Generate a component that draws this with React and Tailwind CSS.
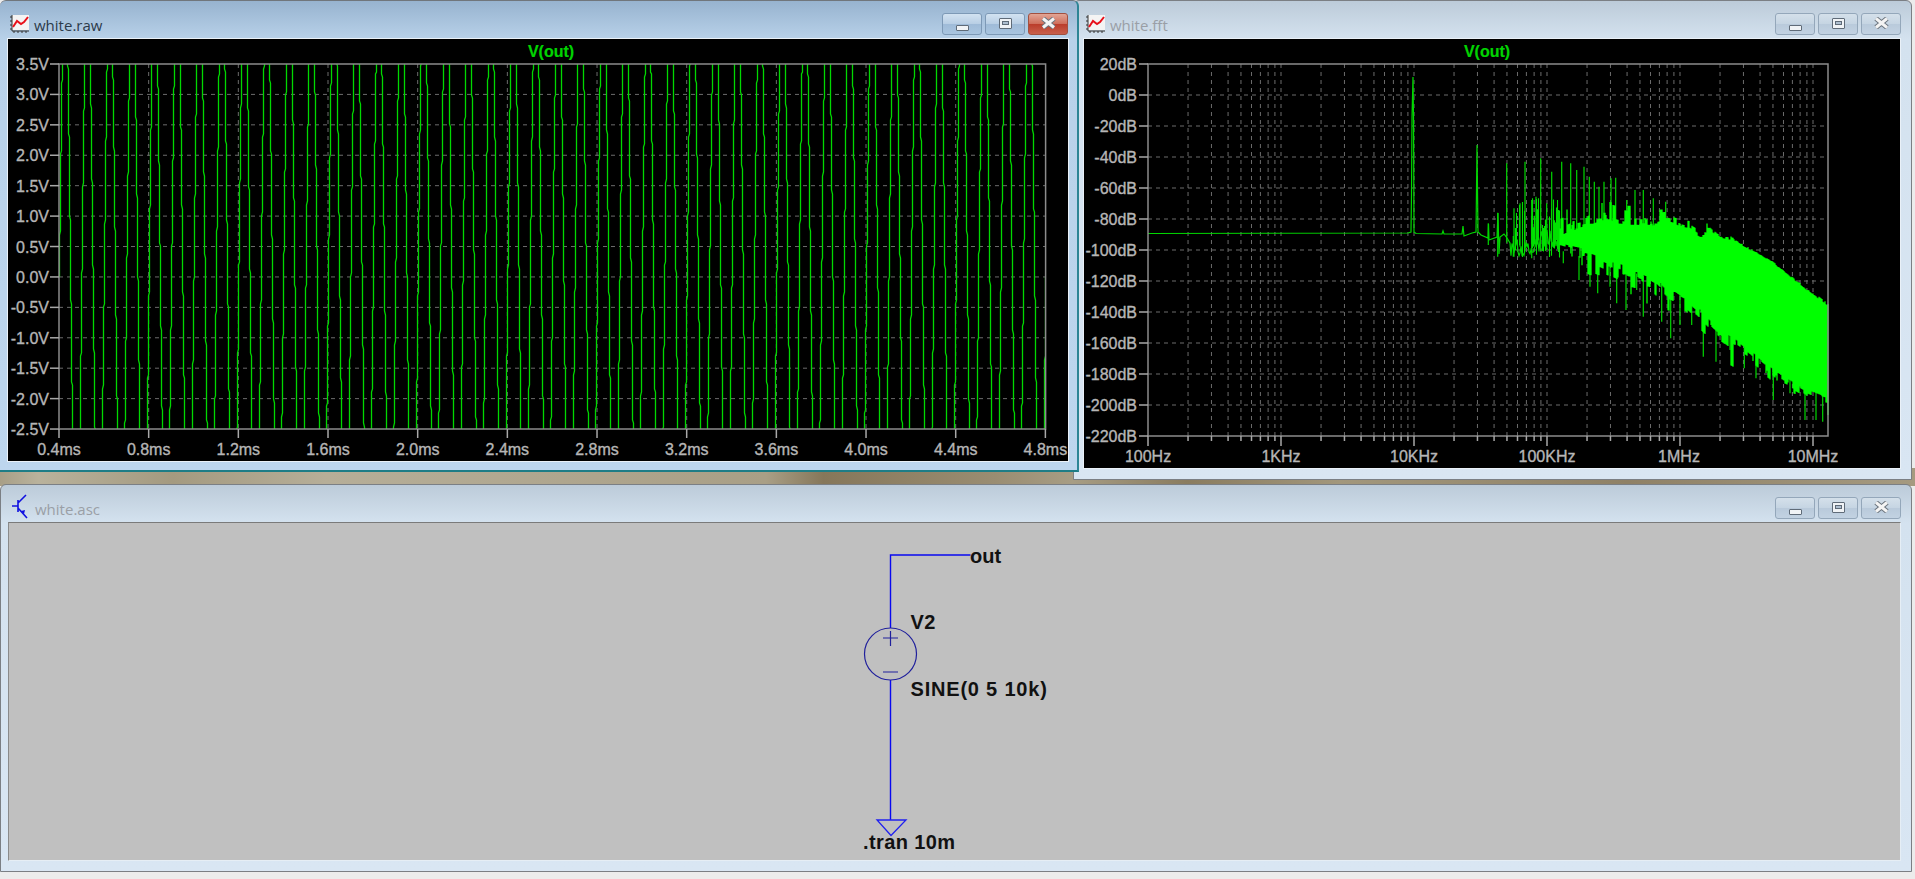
import React from "react";

const range = (a, b, s = 1) => { const o = []; for (let v = a; v <= b + 1e-9; v += s) o.push(v); return o; };

function rng(seed) {
  let a = seed;
  return () => {
    a |= 0; a = (a + 0x6d2b79f5) | 0;
    let t = Math.imul(a ^ (a >>> 15), 1 | a);
    t = (t + Math.imul(t ^ (t >>> 7), 61 | t)) ^ t;
    return ((t ^ (t >>> 14)) >>> 0) / 4294967296;
  };
}

function lerp(table, X) {
  if (X <= table[0][0]) return table[0][1];
  for (let i = 1; i < table.length; i++) {
    if (X <= table[i][0]) {
      const [a, b] = table[i - 1];
      const [c, d] = table[i];
      return b + ((d - b) * (X - a)) / (c - a);
    }
  }
  return table[table.length - 1][1];
}

function wavePath() {
  let d = "";
  let lx = null, ly = null;
  for (let i = 0; i <= 44 * 500; i++) {
    const p = i / 500;
    const v = 5 * Math.sin(2 * Math.PI * p);
    const x = Math.round(59 + p * 22.42) + 0.5;
    const y = Math.round(64 + (3.5 - v) * 60.83);
    if (x !== lx || y !== ly) {
      d += (lx === null ? "M" : "L") + x + " " + y;
      lx = x; ly = y;
    }
  }
  return d;
}

const TOP = [[180,232],[220,215],[260,205],[300,185],[340,190],[380,200],[420,200],[460,200],[500,195],[540,210],[570,215],[600,235],[630,240],[660,265],[700,270],[740,295],[770,310],[820,340],[870,380],[920,420],[985,468]];
const BOT = [[180,285],[220,300],[260,310],[300,325],[340,340],[380,360],[420,370],[460,385],[500,425],[560,455],[600,490],[650,540],[700,575],[760,620],[820,670],[870,700],[920,730],[985,755]];
const UP8 = [[20,40],[75,35],[122,25],[155,65],[185,35],[212,40],[230,60],[252,50],[268,80],[283,95],[297,110],[312,95],[333,85],[347,83],[380,150],[405,120],[430,120],[460,145],[497,155]];
const DN8 = [[40,320],[95,325],[190,340],[237,390],[270,410],[293,430],[330,410],[350,460],[378,480],[410,420],[430,500],[485,515],[512,565],[540,525],[575,525],[610,620],[648,635],[690,600],[733,655],[768,685],[820,750],[870,730],[915,810],[948,810],[968,815]];
const SP10 = [[265,520,585],[293,488,620],[342,475,620],[360,460,590],[395,450,625],[408,440,590],[440,460,600]];

function fftPaths() {
  const r = rng(12345);
  let trace = "M1148 233.5L1408 233L1411 232L1411.5 195L1412 117L1413 77L1413.5 117L1414 232L1416 233.5L1442 234L1443 231L1444 234L1462 234L1463 226L1464 236L1472 233L1476 232L1476.5 190L1477 145L1477.5 190L1478 232L1481 235L1488 238L1488.5 224L1489 240L1497 237L1498 213L1499 254L1500 237L1504 234L1507 238L1510 243";
  for (let x = 1511; x <= 1560; x++) {
    trace += "L" + x + " " + (238 + r() * 18 - (x > 1540 ? 8 : 0)).toFixed(1);
  }
  let spikes = "";
  UP8.forEach(([X, Y]) => {
    const x = 1500 + X / 3;
    spikes += `M${x.toFixed(1)} ${(150 + Y / 3).toFixed(1)}V${(238 + r() * 18).toFixed(1)}`;
  });
  DN8.forEach(([X, Y]) => {
    const x = 1500 + X / 3;
    spikes += `M${x.toFixed(1)} ${(232 + (X / 985) * 100).toFixed(1)}V${(150 + Y / 3).toFixed(1)}`;
  });
  SP10.forEach(([X, a, b]) => {
    const x = 1400 + X / 3;
    spikes += `M${x.toFixed(1)} ${(50 + a / 3).toFixed(1)}V${(50 + b / 3).toFixed(1)}`;
  });
  let sparse = "";
  for (let x = 1514; x < 1560; x++) {
    if (r() < 0.35 + (x - 1514) * 0.012) {
      const a = 228 - r() * 30;
      const b = 240 + r() * 18;
      sparse += `M${x + 0.5} ${a.toFixed(1)}V${b.toFixed(1)}`;
    }
  }
  let core = "";
  let toothT = 0, toothB = 0, remT = 0, remB = 0;
  for (let x = 1560; x <= 1828; x++) {
    const X = (x - 1500) * 3;
    const aT = X < 500 ? 26 : X < 620 ? 14 : X < 700 ? 5 : 3;
    const aB = X < 600 ? 46 : X < 800 ? 34 : 22;
    if (remT <= 0) { remT = 1 + Math.floor(r() * 3); toothT = r() * r() * aT; }
    if (remB <= 0) { remB = 1 + Math.floor(r() * 4); toothB = r() * r() * aB; }
    remT--; remB--;
    const shiftT = X < 620 ? 9 : 0;
    const t = 150 + lerp(TOP, X) / 3 + shiftT - toothT;
    const b = 150 + lerp(BOT, X) / 3 - 4 + toothB;
    core += `M${x} ${t.toFixed(1)}V${b.toFixed(1)}`;
  }
  return { trace, spikes, sparse, core };
}

const LABEL = "fill-[#b6b6b6] stroke-[#b6b6b6] stroke-[0.35px] text-[16px]";
const GRID = "stroke-[#6c6c6c] [stroke-dasharray:4_4] stroke-1";
const AXIS = "stroke-[#8c8c8c] stroke-[1.5px] fill-none";
const TICK = "stroke-[#a8a8a8] stroke-[1.5px]";
const TITLE = "fill-[#00d400] stroke-[#00d400] stroke-[0.2px] text-[16px] font-bold";

function GraphIcon() {
  return (
    <svg viewBox="0 0 20 20" className="w-5 h-5 shrink-0">
      <rect x="3" y="1" width="17" height="15" fill="#f4f4f4" />
      <path d="M3 1V17H20" stroke="#333" strokeWidth="1" fill="none" />
      <path d="M1 3H3M1 7H3M1 11H3M1 15H3M5 17V19M9 17V19M13 17V19M17 17V19" stroke="#333" strokeWidth="1" />
      <path d="M4 13L8 7L12 10L15 8L19 3" stroke="#e8101a" strokeWidth="2" fill="none" />
    </svg>
  );
}

function TransistorIcon() {
  return (
    <svg viewBox="0 0 20 26" className="w-5 h-[26px] shrink-0 -mt-[5px]">
      <path d="M2 13H8M8 7V19M8 10L16 2M8 15L17 25" stroke="#1010e0" strokeWidth="1.6" fill="none" />
      <path d="M15 17L11 18L14 21Z" fill="#1010e0" />
    </svg>
  );
}

function Glyph({ type }) {
  if (type === "min") {
    return <div className="w-[13px] h-[6px] mt-[7px] rounded-[1px] border border-[#5f6b78] bg-[#f0f3f6]" />;
  }
  if (type === "max") {
    return (
      <div className="w-[13px] h-[11px] -mt-[2px] rounded-[1px] border border-[#5f6b78] bg-[#f0f3f6] flex items-center justify-center">
        <div className="w-[7px] h-[4px] border border-[#5f6b78] bg-[#aebfd0]" />
      </div>
    );
  }
  return (
    <svg viewBox="0 0 15 12" className="w-[15px] h-3 -mt-[2px]">
      <path d="M2 1.5L13 10.5M13 1.5L2 10.5" stroke="#6a737d" strokeWidth="5" />
      <path d="M2 1.5L13 10.5M13 1.5L2 10.5" stroke="#f4f4f4" strokeWidth="3" />
    </svg>
  );
}

function Buttons({ active, mr }) {
  const base = active
    ? "border-[#7d99b6] bg-[linear-gradient(#d2e2f1_0%,#b9cfe5_48%,#9fbbd8_52%,#a9c5e0_100%)]"
    : "border-[#94a7ba] bg-[linear-gradient(#d4e0ea_0%,#c6d5e3_48%,#b9cadb_52%,#c2d2e2_100%)]";
  const close = active
    ? "border-[#a2503f] bg-[linear-gradient(#e2a595_0%,#cf6f5c_48%,#bb3d2b_52%,#c8604c_100%)]"
    : base;
  return (
    <div className={`ml-auto flex gap-[3px] ${mr}`}>
      {["min", "max", "close"].map((t) => (
        <div
          key={t}
          className={`w-[40px] h-[22px] rounded-[3px] border flex items-center justify-center ${t === "close" ? close : base}`}
        >
          <Glyph type={t} />
        </div>
      ))}
    </div>
  );
}

function TitleBar({ icon, title, active, mr }) {
  return (
    <div className="h-[37px] shrink-0 flex items-start pt-[12px]">
      <div className="flex items-start gap-[5px] pl-[2px] pt-[1px]">
        {icon}
        <span
          className={`text-[15px] leading-[22px] [font-family:'Open_Sans',sans-serif] ${active ? "text-[#2c3a4a]" : "text-[#9a9fa6]"}`}
        >
          {title}
        </span>
      </div>
      <Buttons active={active} mr={mr} />
    </div>
  );
}

function RawPlot() {
  const ys = range(0, 12).map((i) => 64 + i * 30.42);
  const xs = range(0, 11).map((i) => 59 + i * 89.67);
  const yl = ["3.5V","3.0V","2.5V","2.0V","1.5V","1.0V","0.5V","0.0V","-0.5V","-1.0V","-1.5V","-2.0V","-2.5V"];
  const xl = ["0.4ms","0.8ms","1.2ms","1.6ms","2.0ms","2.4ms","2.8ms","3.2ms","3.6ms","4.0ms","4.4ms","4.8ms"];
  return (
    <svg viewBox="8 39 1060 422" className="block w-[1060px] h-[422px] bg-black">
      <defs>
        <clipPath id="rawclip"><rect x="59" y="64" width="987" height="365" /></clipPath>
      </defs>
      {ys.slice(1, -1).map((y) => <line key={y} x1="59" x2="1046" y1={y} y2={y} className={GRID} />)}
      {xs.slice(1, -1).map((x) => <line key={x} x1={x} x2={x} y1="64" y2="429" className={GRID} />)}
      <path d={wavePath()} clipPath="url(#rawclip)" fill="none" className="stroke-[#00d800] stroke-[1.3px]" />
      <rect x="59" y="64" width="986.6" height="365" className={AXIS} />
      {ys.map((y) => <line key={y} x1="50" x2="59" y1={y} y2={y} className={TICK} />)}
      {xs.map((x) => <line key={x} x1={x} x2={x} y1="429" y2="438" className={TICK} />)}
      {yl.map((t, i) => <text key={t} x="49" y={ys[i] + 6} textAnchor="end" className={LABEL}>{t}</text>)}
      {xl.map((t, i) => <text key={t} x={xs[i]} y="455" textAnchor="middle" className={LABEL}>{t}</text>)}
      <text x="551" y="57" textAnchor="middle" className={TITLE}>V(out)</text>
    </svg>
  );
}

function FftPlot() {
  const ys = range(0, 12).map((i) => 64 + i * 31);
  const decades = [0, 1, 2, 3, 4];
  const minors = [];
  decades.forEach((d) => { range(2, 10).forEach((k) => minors.push({ x: 1148 + 133 * (d + Math.log10(k)), k })); });
  const yl = ["20dB","0dB","-20dB","-40dB","-60dB","-80dB","-100dB","-120dB","-140dB","-160dB","-180dB","-200dB","-220dB"];
  const xl = [["100Hz",1148],["1KHz",1281],["10KHz",1414],["100KHz",1547],["1MHz",1679],["10MHz",1813]];
  const f = fftPaths();
  return (
    <svg viewBox="1084 39 816 429" className="block w-[816px] h-[429px] bg-black">
      {ys.slice(1, -1).map((y) => <line key={y} x1="1148" x2="1828" y1={y} y2={y} className={GRID} />)}
      {minors.map((m) => <line key={m.x} x1={m.x} x2={m.x} y1="64" y2="436" className={GRID} />)}
      <path d={f.trace} fill="none" className="stroke-[#00d800] stroke-[1.2px]" />
      <path d={f.sparse} fill="none" className="stroke-[#00e000] stroke-[1.1px]" />
      <path d={f.spikes} fill="none" className="stroke-[#00d800] stroke-[1.2px]" />
      <path d={f.core} fill="none" className="stroke-[#00ff00] stroke-[1.3px]" />
      <rect x="1148" y="64" width="680" height="372" className={AXIS} />
      {ys.map((y) => <line key={y} x1="1139" x2="1148" y1={y} y2={y} className={TICK} />)}
      {minors.map((m) => (
        <line key={m.x} x1={m.x} x2={m.x} y1="436" y2={m.k === 10 ? 446 : 441} className={TICK} />
      ))}
      {yl.map((t, i) => <text key={t} x="1137" y={ys[i] + 6} textAnchor="end" className={LABEL}>{t}</text>)}
      {xl.map(([t, x]) => <text key={t} x={x} y="462" textAnchor="middle" className={LABEL}>{t}</text>)}
      <line x1="1148" x2="1148" y1="436" y2="446" className={TICK} />
      <text x="1487" y="57" textAnchor="middle" className={TITLE}>V(out)</text>
    </svg>
  );
}

function Schematic() {
  const ST = "fill-[#111111] text-[20px] font-bold";
  return (
    <svg viewBox="9 523 1891 337" className="block w-[1891px] h-[337px] bg-[#c0c0c0]">
      <path d="M970.5 555H890.5V628M890.5 680V820" fill="none" stroke="#0808f0" strokeWidth="1.4" />
      <circle cx="890.5" cy="654" r="26" fill="none" stroke="#20209c" strokeWidth="1.2" />
      <path d="M883 638H898M890.5 631V646M883 672H898" fill="none" stroke="#20209c" strokeWidth="1.2" />
      <path d="M877 820H906L891 835.5Z" fill="none" stroke="#2020f0" strokeWidth="1.3" />
      <text x="970" y="563" className={ST}>out</text>
      <text x="910.5" y="629" className={`${ST} tracking-[0.4px]`}>V2</text>
      <text x="910.5" y="696" className={`${ST} tracking-[0.8px]`}>SINE(0 5 10k)</text>
      <text x="863" y="849" className={`${ST} tracking-[0.4px]`}>.tran 10m</text>
    </svg>
  );
}

export default function App() {
  return (
    <div className="relative w-[1915px] h-[879px] overflow-hidden bg-[#ececec] [font-family:'Liberation_Sans',Arial,sans-serif]">
      <div className="absolute left-0 top-[468px] w-full h-[18px] bg-[linear-gradient(90deg,#a89f87_0%,#b9b29c_2%,#a49a80_9%,#b6ae98_17%,#a99f86_40%,#86775a_43%,#9a8d72_52%,#a79d84_56%,#8a7c5f_62%,#a2977c_70%,#8f8166_85%,#a59a80_100%)]" />

      <div className="absolute left-[1073px] top-0 w-[839px] h-[480px] rounded-t-[6px] border border-[#7b7f84] pl-[9px] pr-[10px] pb-[10px] flex flex-col bg-[linear-gradient(#bccbd9_0px,#d4e2ef_38px,#d9e6f3_100%)]">
        <TitleBar icon={<GraphIcon />} title="white.fft" mr="mr-0" />
        <div className="border border-[#eaf1f8] w-fit">
          <FftPlot />
        </div>
      </div>

      <div className="absolute left-0 top-0 w-[1079px] h-[472px] rounded-t-[6px] border-t border-t-[#70767c] border-r-2 border-r-[#2d8595] border-b-2 border-b-[#1e7d86] pl-[7px] pr-[8px] pb-[8px] flex flex-col bg-[linear-gradient(#97b3cf_0px,#b8d1e9_38px,#bdd6ee_100%)]">
        <TitleBar icon={<GraphIcon />} title="white.raw" active mr="mr-[1px]" />
        <div className="border border-[#eaf1f8] w-fit">
          <RawPlot />
        </div>
      </div>

      <div className="absolute left-0 top-[484px] w-[1912px] h-[388px] rounded-t-[6px] border border-[#7b7f84] pl-[7px] pr-[10px] pb-[10px] flex flex-col bg-[linear-gradient(#bccbd9_0px,#d4e2ef_38px,#d9e6f3_100%)]">
        <TitleBar icon={<TransistorIcon />} title="white.asc" mr="mr-0" />
        <div className="border border-[#e6eef5] border-t-[#7a7a7a] border-l-[#8a8a8a] w-fit">
          <Schematic />
        </div>
      </div>
    </div>
  );
}
